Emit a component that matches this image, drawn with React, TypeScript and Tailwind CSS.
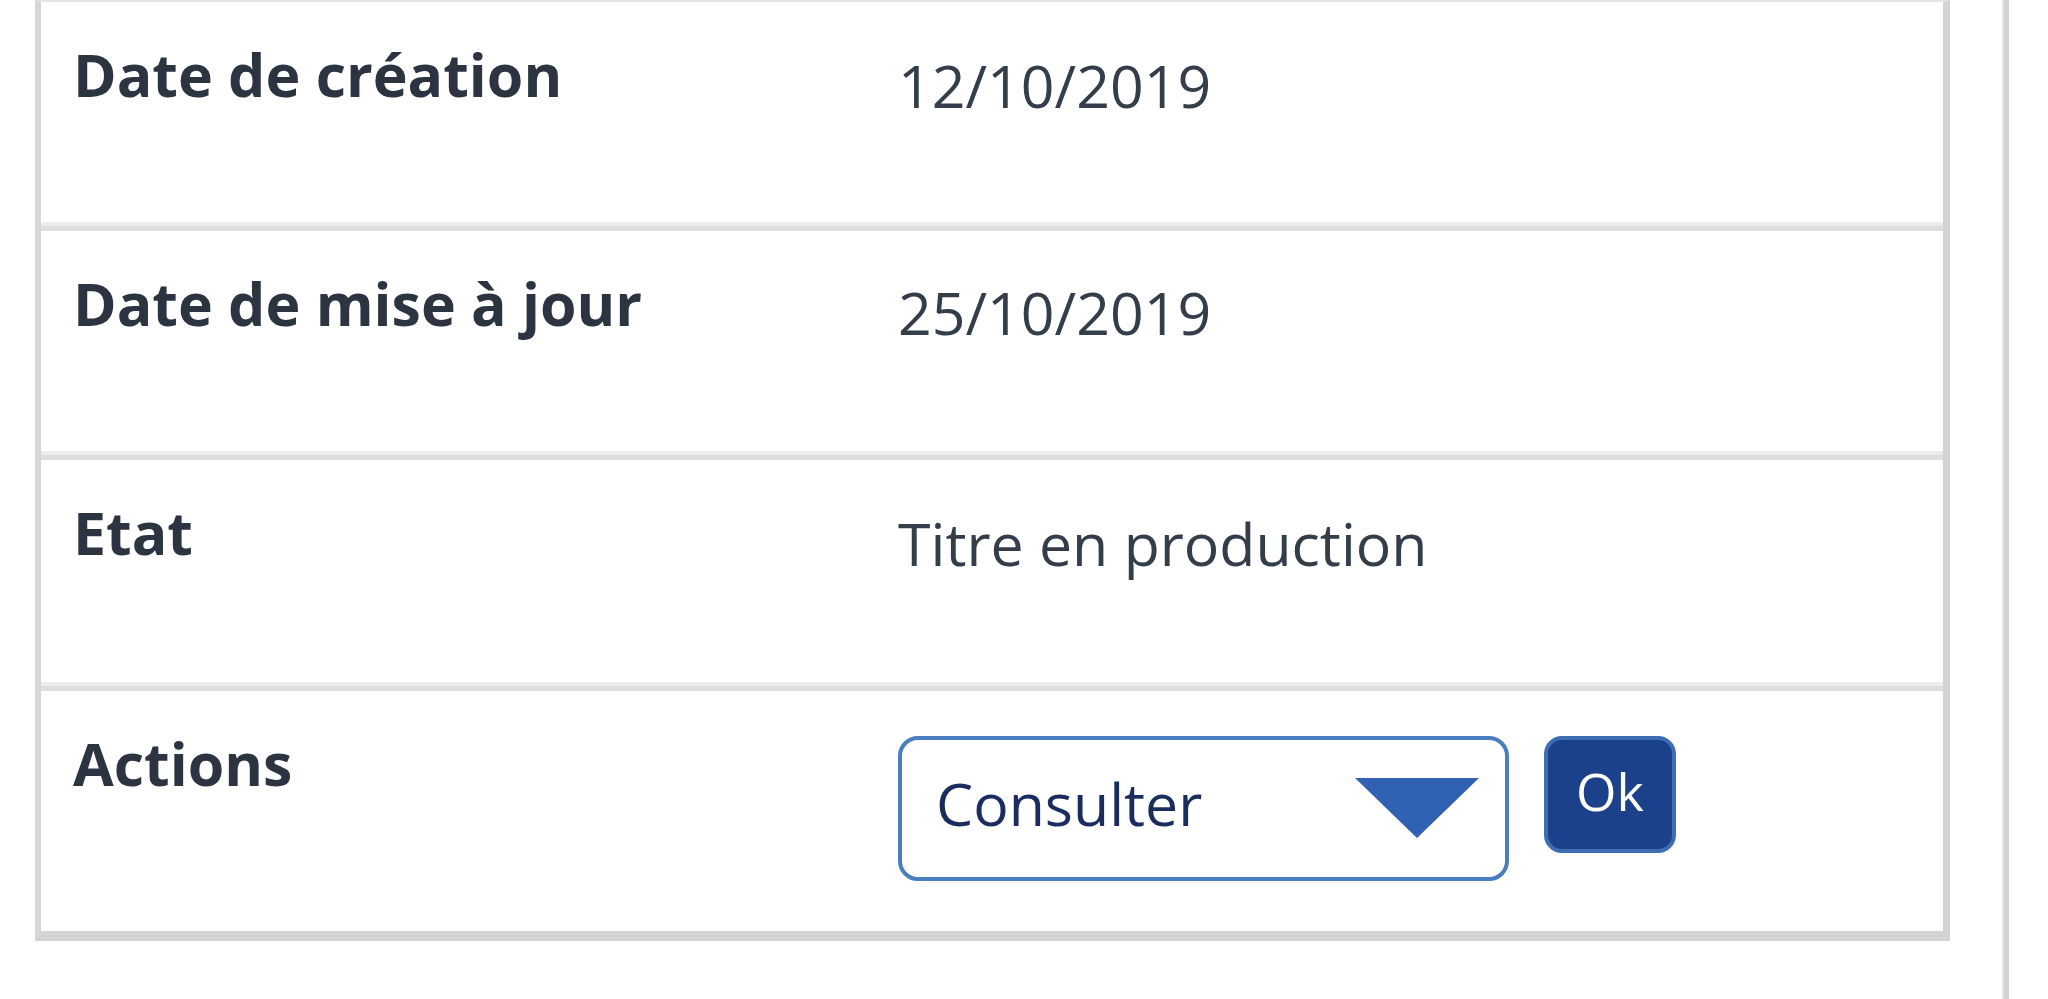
import React from 'react';

// Simple detail table: label / value rows, last row holds the action picker
interface DetailRow {
  label: string;
  value: string;
}

const rows: DetailRow[] = [
  { label: 'Date de création', value: '12/10/2019' },
  { label: 'Date de mise à jour', value: '25/10/2019' },
  { label: 'Etat', value: 'Titre en production' },
];

function Separator() {
  return (
    <div className="flex flex-col">
      <div className="h-[4px] bg-[#ececec]" />
      <div className="h-[5px] bg-[#dedede]" />
    </div>
  );
}

function Row({ label, children, height }: { label: string; children: React.ReactNode; height: string }) {
  return (
    <div className={`flex items-start ${height}`}>
      <div className="w-[857px] shrink-0 pl-[32px] pt-[31px] text-[59px] font-bold leading-[82px] text-[#2b3440]">
        {label}
      </div>
      <div className="flex-1">{children}</div>
    </div>
  );
}

export default function App() {
  return (
    <div
      className="flex h-[999px] w-[2048px] overflow-hidden bg-white"
      style={{ fontFamily: '"Open Sans", "Noto Sans", sans-serif' }}
    >
      <div className="w-[2002px] shrink-0 pl-[35px]">
        <div className="w-[1915px] border-t-[2px] border-l-[6px] border-r-[7px] border-b-[10px] border-t-[#e4e4e4] border-l-[#d6d6d6] border-r-[#d3d3d3] border-b-[#d3d3d3]">
          <Row label={rows[0].label} height="h-[220px]">
            <div className="pt-[42px] text-[59px] leading-[82px] text-[#343e4a]">{rows[0].value}</div>
          </Row>
          <Separator />
          <Row label={rows[1].label} height="h-[220px]">
            <div className="pt-[40px] text-[59px] leading-[82px] text-[#343e4a]">{rows[1].value}</div>
          </Row>
          <Separator />
          <Row label={rows[2].label} height="h-[222px]">
            <div className="pt-[42px] text-[59px] leading-[82px] text-[#343e4a]">{rows[2].value}</div>
          </Row>
          <Separator />
          <Row label="Actions" height="h-[240px]">
            <div className="flex items-start gap-[35px] pt-[45px]">
              <div className="flex h-[145px] w-[611px] items-center justify-between rounded-[20px] border-[4px] border-[#4b7ec0] pl-[34px] pr-[26px]">
                <span className="-mt-[12px] text-[59px] leading-[82px] text-[#1b2d5f]">Consulter</span>
                <svg width="124" height="60" viewBox="0 0 124 60" className="-mt-[2px]">
                  <polygon points="0,0 124,0 62,60" fill="#3161b3" />
                </svg>
              </div>
              <button className="flex h-[117px] w-[132px] items-center justify-center rounded-[18px] border-[4px] border-[#3f6db3] bg-[#1b418b] pb-[8px] text-[52px] leading-none text-white">
                Ok
              </button>
            </div>
          </Row>
        </div>
        <div className="mt-[58px] h-[2px] w-[1915px] bg-[#efefef]" />
      </div>
      <div className="h-full w-[7px] shrink-0 border-l-[2px] border-[#e2e2e2] bg-[#d2d2d2]" />
    </div>
  );
}
